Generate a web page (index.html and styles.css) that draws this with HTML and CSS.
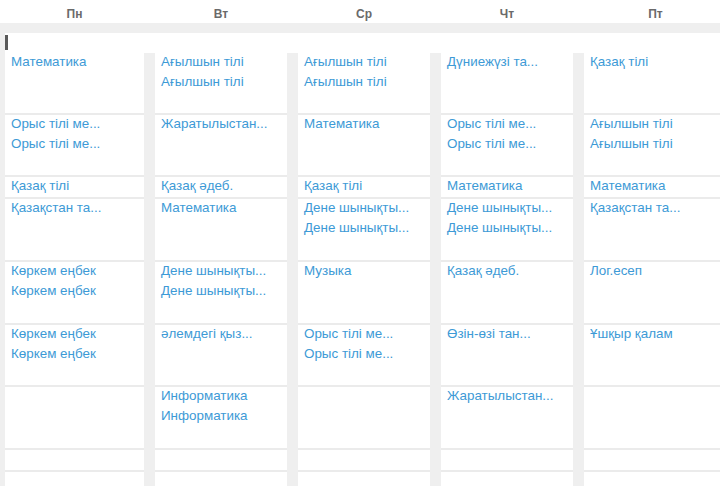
FILE: index.html
```html
<!DOCTYPE html>
<html>
<head>
<meta charset="utf-8">
<link rel="stylesheet" href="styles.css">
</head>
<body>
<div class="page">
  <div class="days">
    <div class="day">Пн</div>
    <div class="day">Вт</div>
    <div class="day">Ср</div>
    <div class="day">Чт</div>
    <div class="day">Пт</div>
  </div>
  <div class="band"></div>
  <div class="toolbar"><span class="caret"></span></div>
  <div class="grid">
    <!-- row 1 -->
    <div class="cell"><a>Математика</a></div>
    <div class="cell"><a>Ағылшын тілі</a><a>Ағылшын тілі</a></div>
    <div class="cell"><a>Ағылшын тілі</a><a>Ағылшын тілі</a></div>
    <div class="cell"><a>Дүниежүзі та...</a></div>
    <div class="cell"><a>Қазақ тілі</a></div>
    <!-- row 2 -->
    <div class="cell"><a>Орыс тілі ме...</a><a>Орыс тілі ме...</a></div>
    <div class="cell"><a>Жаратылыстан...</a></div>
    <div class="cell"><a>Математика</a></div>
    <div class="cell"><a>Орыс тілі ме...</a><a>Орыс тілі ме...</a></div>
    <div class="cell"><a>Ағылшын тілі</a><a>Ағылшын тілі</a></div>
    <!-- row 3 -->
    <div class="cell"><a>Қазақ тілі</a></div>
    <div class="cell"><a>Қазақ әдеб.</a></div>
    <div class="cell"><a>Қазақ тілі</a></div>
    <div class="cell"><a>Математика</a></div>
    <div class="cell"><a>Математика</a></div>
    <!-- row 4 -->
    <div class="cell"><a>Қазақстан та...</a></div>
    <div class="cell"><a>Математика</a></div>
    <div class="cell"><a>Дене шынықты...</a><a>Дене шынықты...</a></div>
    <div class="cell"><a>Дене шынықты...</a><a>Дене шынықты...</a></div>
    <div class="cell"><a>Қазақстан та...</a></div>
    <!-- row 5 -->
    <div class="cell"><a>Көркем еңбек</a><a>Көркем еңбек</a></div>
    <div class="cell"><a>Дене шынықты...</a><a>Дене шынықты...</a></div>
    <div class="cell"><a>Музыка</a></div>
    <div class="cell"><a>Қазақ әдеб.</a></div>
    <div class="cell"><a>Лог.есеп</a></div>
    <!-- row 6 -->
    <div class="cell"><a>Көркем еңбек</a><a>Көркем еңбек</a></div>
    <div class="cell"><a>әлемдегі қыз...</a></div>
    <div class="cell"><a>Орыс тілі ме...</a><a>Орыс тілі ме...</a></div>
    <div class="cell"><a>Өзін-өзі тан...</a></div>
    <div class="cell"><a>Ұшқыр қалам</a></div>
    <!-- row 7 -->
    <div class="cell"></div>
    <div class="cell"><a>Информатика</a><a>Информатика</a></div>
    <div class="cell"></div>
    <div class="cell"><a>Жаратылыстан...</a></div>
    <div class="cell"></div>
    <!-- row 8 -->
    <div class="cell"></div>
    <div class="cell"></div>
    <div class="cell"></div>
    <div class="cell"></div>
    <div class="cell"></div>
    <!-- row 9 -->
    <div class="cell"></div>
    <div class="cell"></div>
    <div class="cell"></div>
    <div class="cell"></div>
    <div class="cell"></div>
  </div>
</div>
</body>
</html>
```
FILE: styles.css
```css
html, body {
  margin: 0;
  padding: 0;
  background: #ffffff;
  overflow: hidden;
}
body {
  font-family: "Liberation Sans", Arial, sans-serif;
  width: 720px;
  height: 486px;
}
.page {
  width: 740px;
}
.days {
  display: grid;
  grid-template-columns: 139px 132px 132px 132px 143px;
  column-gap: 11px;
  padding-left: 5px;
  height: 23px;
  align-items: center;
}
.day {
  text-align: center;
  font-size: 12px;
  font-weight: bold;
  color: #6a6a6a;
  padding-top: 5px;
}
.band {
  height: 10px;
  background: #efefef;
}
.toolbar {
  height: 20px;
  border-left: 5px solid #efefef;
  background: #ffffff;
  display: flex;
  align-items: flex-start;
}
.caret {
  display: block;
  width: 3px;
  height: 15px;
  margin-top: 2px;
  background: #595959;
}
.grid {
  display: grid;
  grid-template-columns: 139px 132px 132px 132px 143px;
  grid-template-rows: 62px 62px 22px 63px 63px 62px 63px 22px 22px;
  column-gap: 11px;
  padding-left: 5px;
  background: #efefef;
}
.cell {
  background: #ffffff;
  border-bottom: 2px solid #ebebeb;
  padding: 0 6px;
  display: flex;
  flex-direction: column;
  gap: 2px;
  overflow: hidden;
}
.cell a {
  display: block;
  font-size: 13.4px;
  line-height: 18px;
  color: #3d9ad6;
  white-space: nowrap;
}
```
